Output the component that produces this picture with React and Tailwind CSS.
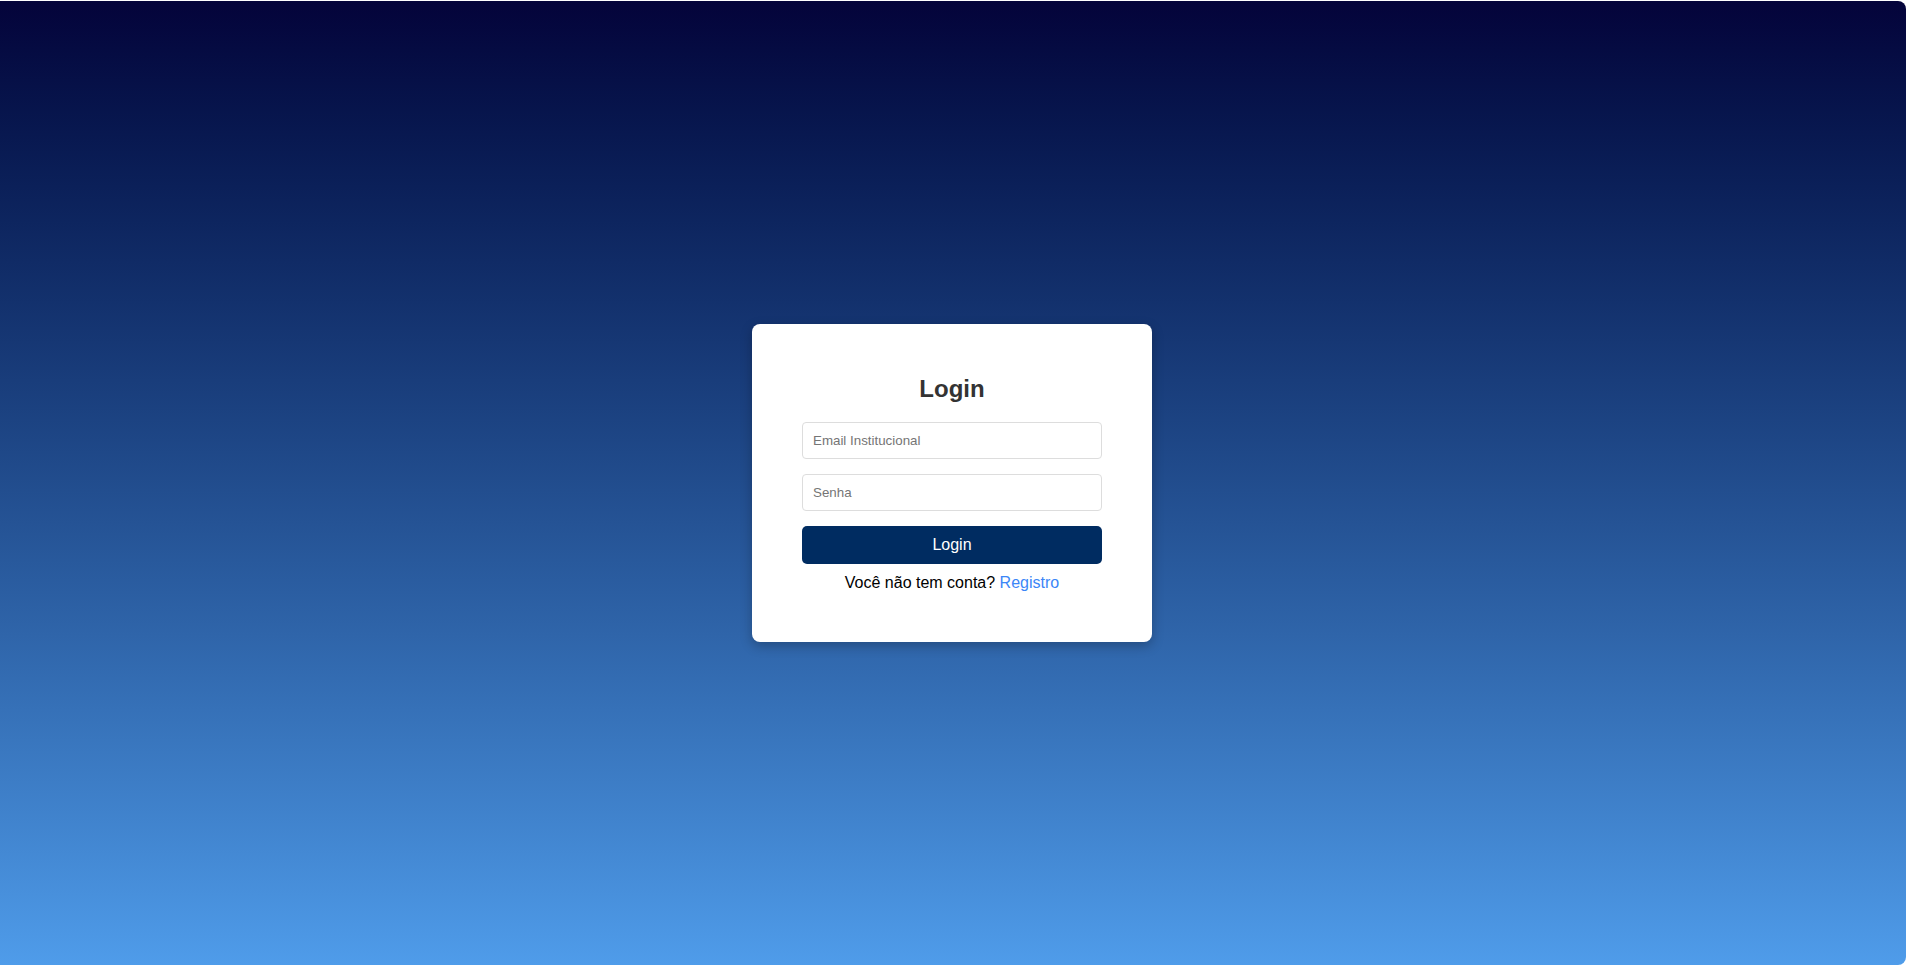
import React from 'react';

export default function App() {
  return (
    <div className="w-[1912px] h-[968px] bg-white pt-px" style={{ fontFamily: '"Liberation Sans", Arial, sans-serif' }}>
      <div className="w-[1906px] h-[964px] pr-[2px] rounded-r-lg bg-gradient-to-b from-[#04043a] to-[#4f9cea] flex items-center justify-center">
        <div className="w-[400px] bg-white rounded-lg shadow-[0_4px_12px_rgba(0,0,0,0.25)] px-[50px] pt-[51px] pb-[50px] flex flex-col">
          <h2 className="text-[24px] leading-[28px] font-bold text-[#333] text-center mb-[19px]">Login</h2>
          <input
            type="email"
            placeholder="Email Institucional"
            className="w-full h-[37px] px-[10px] border border-[#ddd] rounded text-[13.33px] text-[#333] placeholder:text-[#757575] outline-none mb-[15px]"
          />
          <input
            type="password"
            placeholder="Senha"
            className="w-full h-[37px] px-[10px] border border-[#ddd] rounded text-[13.33px] text-[#333] placeholder:text-[#757575] outline-none mb-[15px]"
          />
          <button className="w-full h-[38px] bg-[#002c61] text-white text-[16px] rounded-[5px]">Login</button>
          <p className="mt-[10px] text-[16px] leading-[18px] text-black text-center">
            Você não tem conta? <a href="#" className="text-[#3b86f7]">Registro</a>
          </p>
        </div>
      </div>
    </div>
  );
}
